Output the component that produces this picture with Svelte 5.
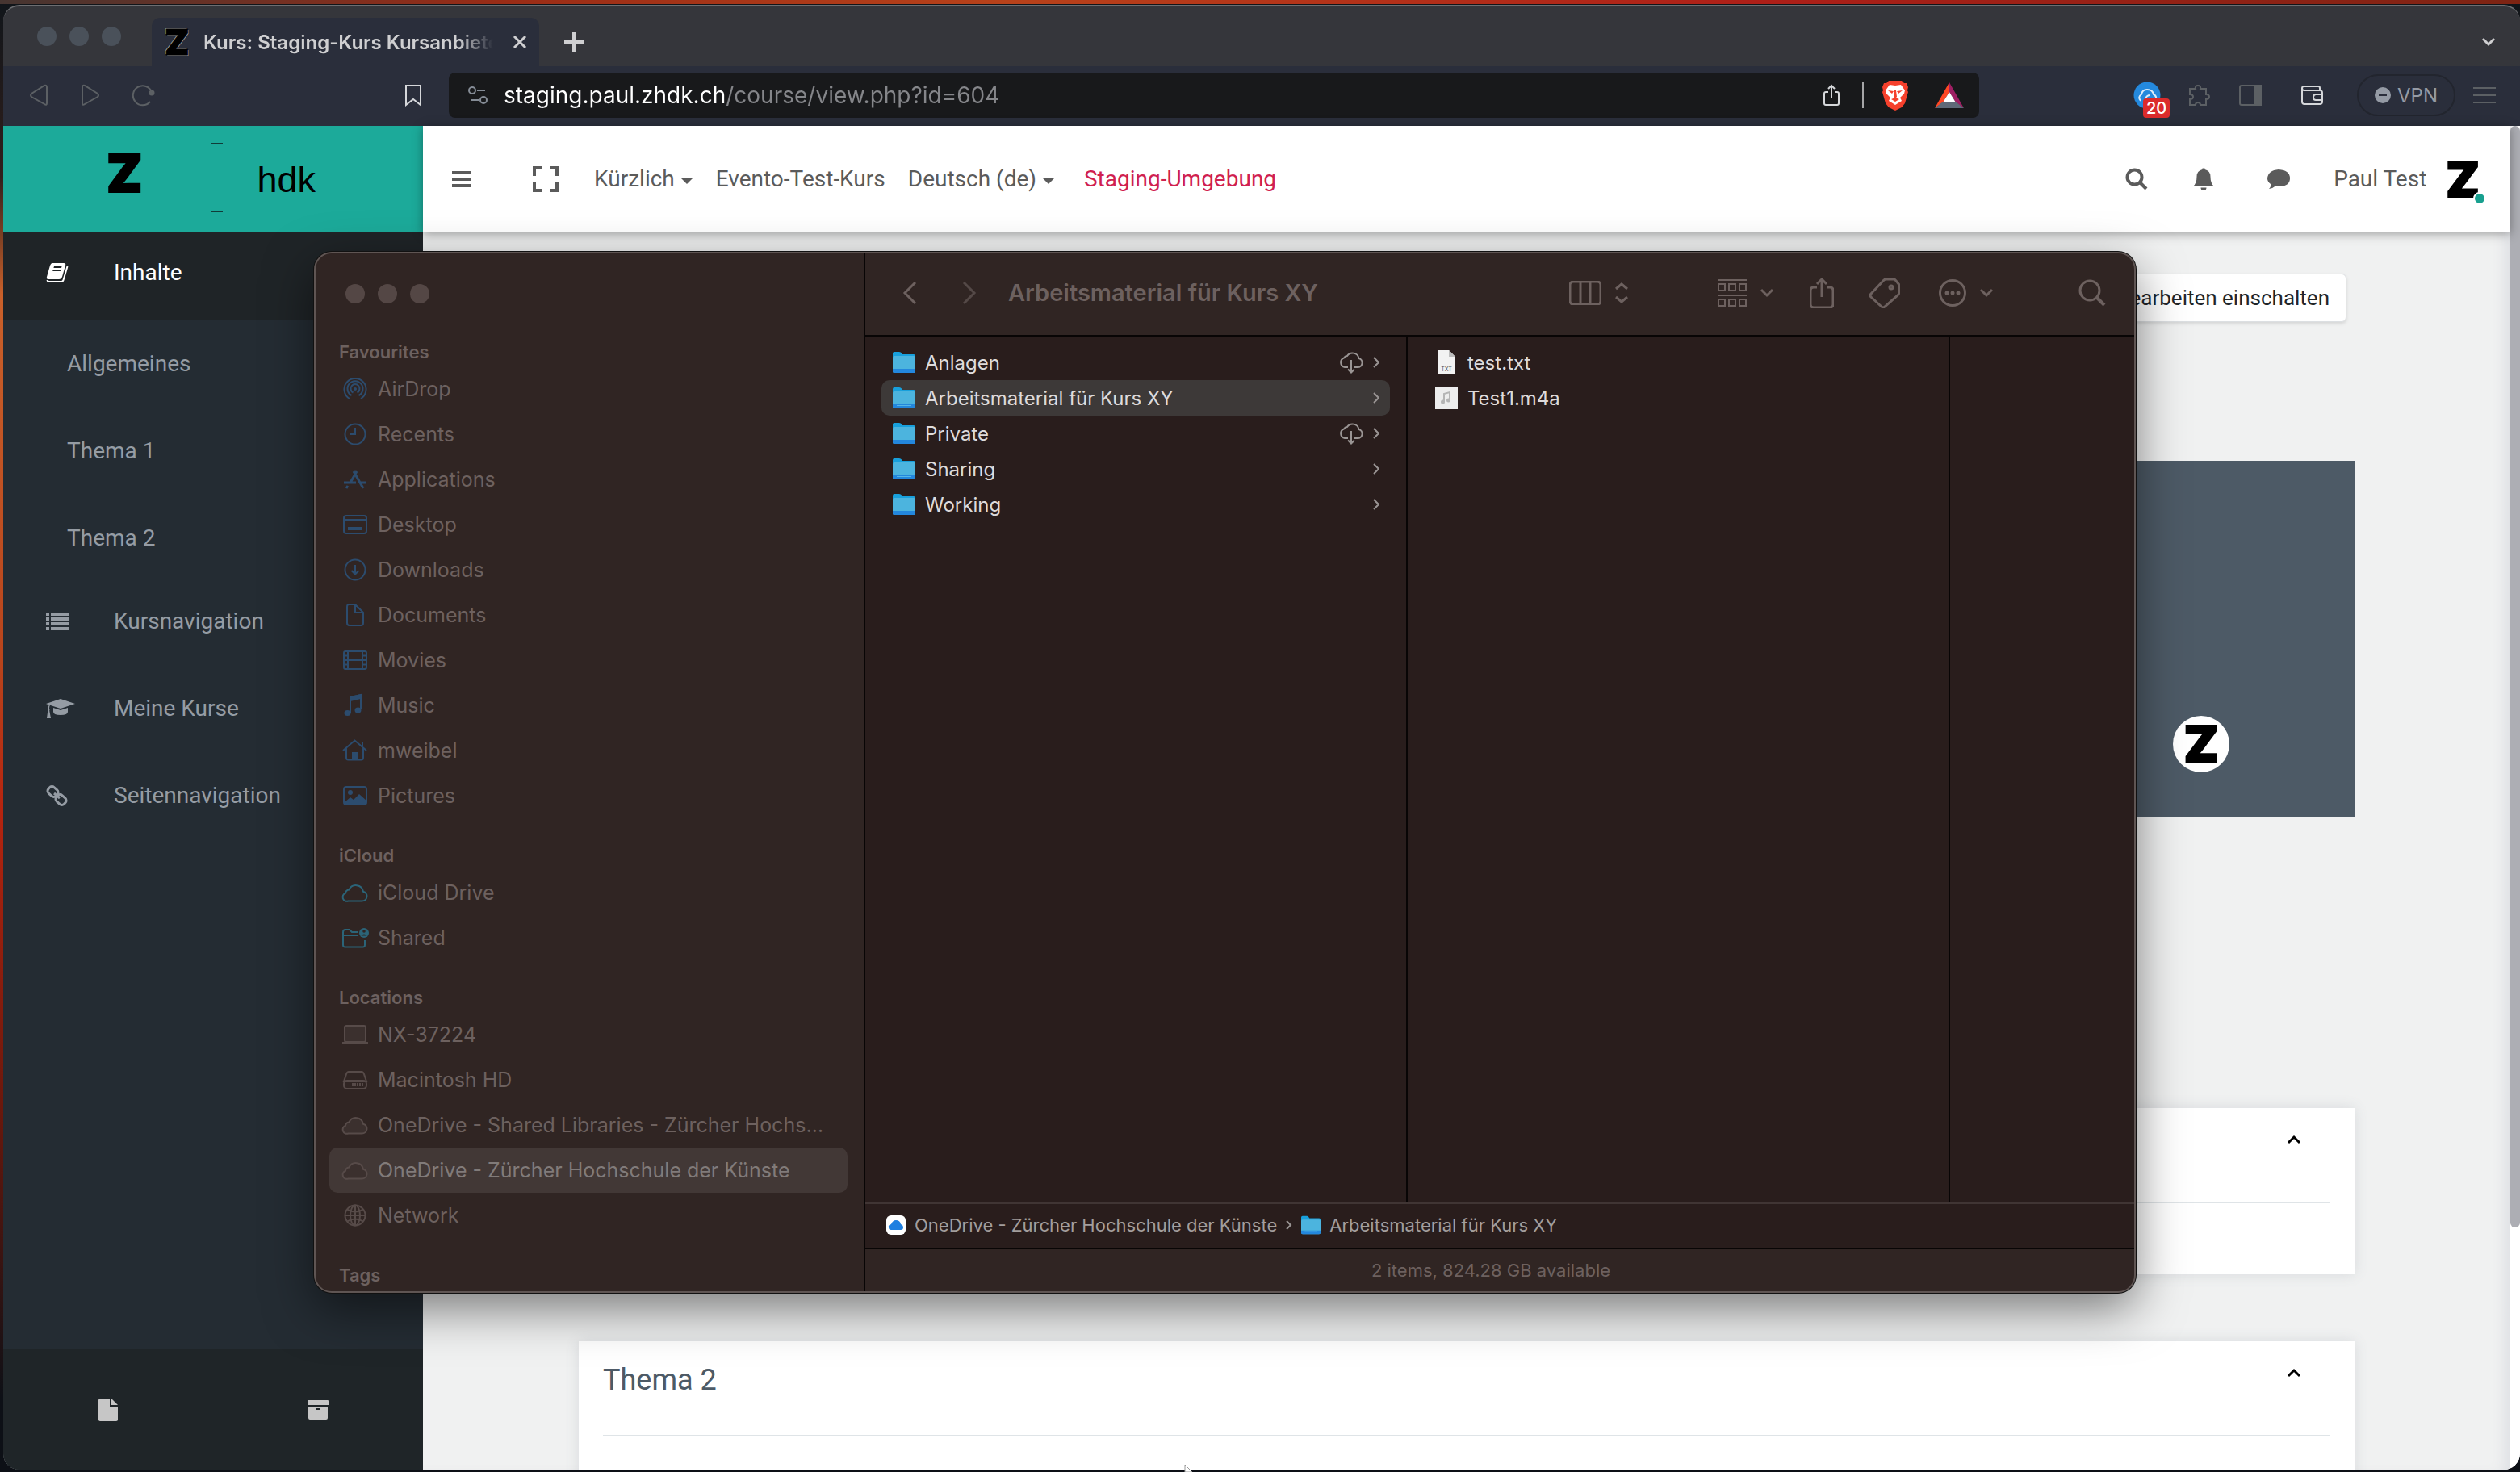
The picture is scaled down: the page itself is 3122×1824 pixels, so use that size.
<script lang="ts">
    interface PlaceGroup {
        title: string
        tone: string
        items: { icon: string; label: string; selected?: boolean }[]
    }

    let url = $state('staging.paul.zhdk.ch/course/view.php?id=604')

    const sections = ['Allgemeines', 'Thema 1', 'Thema 2']

    const navigation = [
        { icon: 'list', label: 'Kursnavigation' },
        { icon: 'graduation', label: 'Meine Kurse' },
        { icon: 'link', label: 'Seitennavigation' },
    ]

    const places: PlaceGroup[] = [
        {
            title: 'Favourites',
            tone: 'blue',
            items: [
                { icon: 'airdrop', label: 'AirDrop' },
                { icon: 'clock', label: 'Recents' },
                { icon: 'apps', label: 'Applications' },
                { icon: 'desktop', label: 'Desktop' },
                { icon: 'download', label: 'Downloads' },
                { icon: 'document', label: 'Documents' },
                { icon: 'film', label: 'Movies' },
                { icon: 'music', label: 'Music' },
                { icon: 'house', label: 'mweibel' },
                { icon: 'picture', label: 'Pictures' },
            ],
        },
        {
            title: 'iCloud',
            tone: 'teal',
            items: [
                { icon: 'cloud', label: 'iCloud Drive' },
                { icon: 'shared', label: 'Shared' },
            ],
        },
        {
            title: 'Locations',
            tone: 'grey',
            items: [
                { icon: 'laptop', label: 'NX-37224' },
                { icon: 'disk', label: 'Macintosh HD' },
                { icon: 'cloud', label: 'OneDrive - Shared Libraries - Zürcher Hochs…' },
                { icon: 'cloud', label: 'OneDrive - Zürcher Hochschule der Künste', selected: true },
                { icon: 'globe', label: 'Network' },
            ],
        },
        { title: 'Tags', tone: 'grey', items: [] },
    ]

    const folders = [
        { name: 'Anlagen', remote: true },
        { name: 'Arbeitsmaterial für Kurs XY', selected: true },
        { name: 'Private', remote: true },
        { name: 'Sharing' },
        { name: 'Working' },
    ]
</script>

{#snippet chevron(dir: string)}
    <svg class="chevron {dir}" viewBox="0 0 18 12" width="18" height="12">
        <path d="M2 2l7 7 7-7" />
    </svg>
{/snippet}

{#snippet folder()}
    <svg class="folder" viewBox="0 0 28 26" width="28" height="26">
        <path d="M0 2q0-2 2-2h6q2 0 3 1.500L12 3h14q2 0 2 2v4H0z" fill="#18a0dc" />
        <rect y="5" width="28" height="21" rx="2" fill="#4cb4de" />
        <path d="M0 21h28v3q0 2-2 2H2q-2 0-2-2z" fill="#2387dd" />
        <path d="M5 22.500h18" stroke="#55b7e8" stroke-width="1" />
    </svg>
{/snippet}

{#snippet placeIcon(name: string)}
    <svg class="place-icon" viewBox="0 0 36 32" width="36" height="32">
        {#if name === 'airdrop'}
            <path d="M11 28a13.500 13.500 0 1 1 14 0M13.500 24a9.500 9.500 0 1 1 9 0M15.500 20.500a5.500 5.500 0 1 1 5 0" />
            <circle cx="18" cy="16" r="2" class="solid" />
        {:else if name === 'clock'}
            <circle cx="18" cy="16" r="12.500" />
            <path d="M18 8v8h-7" />
        {:else if name === 'apps'}
            <path d="M20 6L12 20M16 6l12 21M4 20h15M25 20h7M9 24l-2 3" class="thick" />
        {:else if name === 'desktop'}
            <rect x="4" y="5" width="28" height="22" rx="3" />
            <path d="M4 10h28" />
            <rect x="9" y="19" width="18" height="4" class="solid" />
        {:else if name === 'download'}
            <circle cx="18" cy="16" r="12.500" />
            <path d="M18 10v11M13.500 17l4.500 4.500 4.500-4.500" />
        {:else if name === 'document'}
            <path d="M10 3h8l10 10v13q0 3-3 3H11q-3 0-3-3V6q0-3 2-3zM18 3v10h10" />
        {:else if name === 'film'}
            <rect x="4" y="5" width="28" height="22" rx="2" />
            <path d="M9 5v22M27 5v22M9 16h18M4 10.500h5M4 16h5M4 21.500h5M27 10.500h5M27 16h5M27 21.500h5" />
        {:else if name === 'music'}
            <path d="M12 25V6l13-3v18" />
            <path d="M12 5l13-3v6l-13 3z" class="solid" />
            <ellipse cx="8.500" cy="25.500" rx="4" ry="3.500" class="solid" />
            <ellipse cx="21.500" cy="22" rx="4" ry="3.500" class="solid" />
        {:else if name === 'house'}
            <path d="M3 16L17.500 3.500 32 16M7 13v12q0 2.500 2.500 2.500h16q2.500 0 2.500-2.500V13M27 11V6" />
            <rect x="14" y="18" width="7" height="9" class="solid" />
        {:else if name === 'picture'}
            <rect x="4" y="5" width="28" height="22" rx="3" />
            <circle cx="12" cy="12" r="3" class="solid" />
            <path d="M5 24l7-6 4 3 7-7 9 8v4H5z" class="solid" />
        {:else if name === 'cloud'}
            <path d="M9.500 26.500h17a6 6 0 0 0 1.500-11.800 9.300 9.300 0 0 0-17.600-2.200 5 5 0 0 0-4.400 4.200 5.200 5.200 0 0 0 3.500 9.800z" class="tint" />
        {:else if name === 'shared'}
            <path d="M22 9h-8l-3-3H6q-3 0-3 3v16q0 2.500 2.500 2.500h22q2.500 0 2.500-2.500v-6M3 13h19" />
            <circle cx="29" cy="10" r="6" class="solid" />
            <circle cx="29" cy="8" r="1.800" class="hole" />
            <path d="M25.500 13.500q3.500-4 7 0z" class="hole" />
        {:else if name === 'laptop'}
            <rect x="5" y="5" width="26" height="20" rx="2" class="tint" />
            <path d="M2 26.500h32" class="thick" />
        {:else if name === 'disk'}
            <path d="M10 6h16q2 0 3 3l3 9H4l3-9q1-3 3-3z" />
            <rect x="4" y="17" width="28" height="10" rx="4" />
            <path d="M15 20v4M18 20v4M21 20v4M24 20v4M27 20v4" />
        {:else if name === 'globe'}
            <circle cx="18" cy="16" r="12.500" />
            <ellipse cx="18" cy="16" rx="6" ry="12.500" />
            <path d="M18 3.500v25M5.500 16h25M8 8.500q10 6 20 0M8 23.500q10-6 20 0" />
        {/if}
    </svg>
{/snippet}

{#snippet navIcon(name: string)}
    <svg class="nav-icon" viewBox="0 0 36 28" width="36" height="28">
        {#if name === 'book'}
            <path fill-rule="evenodd" d="M8 2h14q3 0 2 3l-4 14q-1 3-4 3H3q-3 0-2-3L5 5q1-3 3-3zM10 6l-.6 2h9.600l.6-2zM8.800 10l-.6 2h9.600l.6-2z" />
            <path d="M26.500 6l-5 17q-.6 2-3 2H4q-2 0-2.500-2" fill="none" stroke="currentColor" stroke-width="2" />
        {:else if name === 'list'}
            <path d="M0 3h4v4H0zM0 9h4v4H0zM0 15h4v4H0zM0 21h4v4H0zM6 3h22v4H6zM6 9h22v4H6zM6 15h22v4H6zM6 21h22v4H6z" />
        {:else if name === 'graduation'}
            <path d="M18 2l18 6-18 6L5 9.800q-1 1.600-1 4.200 1 1 .2 2.400L6 26H1l1.300-9.600q-1-1.400.4-2.600 0-2.600 1-4.400L0 8z" />
            <path d="M9 13l9 3 9-3v5q0 4-9 4t-9-4z" />
        {:else if name === 'link'}
            <g fill="none" stroke="currentColor" stroke-width="3">
                <rect x="2" y="4" width="13" height="10" rx="4" transform="rotate(42 8.500 9)" />
                <rect x="12" y="14" width="13" height="10" rx="4" transform="rotate(42 18.500 19)" />
                <path d="M10 11l7 6" />
            </g>
        {/if}
    </svg>
{/snippet}

<div class="desktop">
    <div class="browser">
        <header class="tab-strip">
            <div class="lights"><span></span><span></span><span></span></div>
            <div class="tab">
                <span class="favicon">Z</span>
                <span class="tab-title">Kurs: Staging-Kurs Kursanbiete</span>
                <button class="plain" aria-label="Close tab">
                    <svg viewBox="0 0 18 18" width="18" height="18"><path d="M2 2l14 14M16 2L2 16" /></svg>
                </button>
            </div>
            <button class="plain new-tab" aria-label="New tab">
                <svg viewBox="0 0 26 26" width="26" height="26"><path d="M13 1v24M1 13h24" /></svg>
            </button>
            <button class="plain tab-menu" aria-label="Tabs">{@render chevron('down')}</button>
        </header>

        <div class="toolbar">
            <div class="history">
                <button class="plain" aria-label="Back">
                    <svg viewBox="0 0 24 28" width="24" height="28"><path d="M22 4v20q0 3-3 1L3 16q-2-2 0-4L19 2q3-1 3 2z" /></svg>
                </button>
                <button class="plain" aria-label="Forward">
                    <svg viewBox="0 0 24 28" width="24" height="28"><path d="M2 4v20q0 3 3 1l16-9q2-2 0-4L5 2Q2 1 2 4z" /></svg>
                </button>
                <button class="plain" aria-label="Reload">
                    <svg viewBox="0 0 28 28" width="28" height="28">
                        <path d="M22 22a12 12 0 1 1 2-12" />
                        <circle cx="24" cy="11" r="3.500" fill="currentColor" stroke="none" />
                    </svg>
                </button>
            </div>
            <button class="plain bookmark" aria-label="Bookmark">
                <svg viewBox="0 0 20 28" width="20" height="28"><path d="M1 2h18v24l-9-7-9 7z" /></svg>
            </button>
            <div class="address">
                <svg class="tune" viewBox="0 0 24 24" width="24" height="24">
                    <circle cx="5" cy="6" r="4" /><path d="M11 6h10M3 18h10" /><circle cx="19" cy="18" r="4" />
                </svg>
                <input class="url" aria-label="Address" bind:value={url} />
                <button class="plain" aria-label="Share">
                    <svg viewBox="0 0 20 28" width="20" height="28"><path d="M6 10H3q-2 0-2 2v12q0 2 2 2h14q2 0 2-2V12q0-2-2-2h-3M10 18V2M6 6l4-4 4 4" /></svg>
                </button>
                <span class="divider"></span>
                <button class="plain" aria-label="Shields">
                    <svg class="filled" viewBox="0 0 34 38" width="34" height="38">
                        <path d="M9 1h16l3 3 3 0 2 5-1 4 1 2-4 14-4 5-8 4-8-4-4-5L1 15l1-2-1-4 2-5 3 0z" fill="#f5402c" />
                        <path d="M17 7l7-1 5 7-1 4-5 5 2 4-8 5-8-5 2-4-5-5-1-4 5-7z" fill="#fff" />
                        <path d="M8 13l7 1-2 3zM26 13l-7 1 2 3zM16 13h2l1 8-2 2-2-2zM12 24l5-2 5 2-5 3z" fill="#f5402c" />
                    </svg>
                </button>
                <button class="plain" aria-label="Rewards">
                    <svg class="filled" viewBox="0 0 36 32" width="36" height="32">
                        <path d="M18 0v12l-8 13L0 32z" fill="#ff4724" />
                        <path d="M18 0v12l8 13 10 7z" fill="#9e1f63" />
                        <path d="M0 32l9-7h18l9 7z" fill="#5f6a78" />
                        <path d="M18 12l8 13H10z" fill="#fff" />
                    </svg>
                </button>
            </div>
            <div class="extensions">
                <button class="plain cloud-ext" aria-label="Cloud extension">
                    <svg class="filled" viewBox="0 0 34 34" width="34" height="34">
                        <circle cx="17" cy="17" r="16.500" fill="#2489dd" />
                        <path d="M9 24q-4-5 1-8 1-6 7-6 7 0 8 6 4 2 3 6M15 22q1-5 6-5" fill="none" stroke="#dcecfa" stroke-width="2" />
                    </svg>
                    <span class="badge">20</span>
                </button>
                <button class="plain dim" aria-label="Extensions">
                    <svg viewBox="0 0 28 28" width="28" height="28"><path d="M3 6h7q-1-4 3-4t3 4h7v7q4 0 4 3t-4 3v7h-7q0-3-3-3t-3 3H3v-7q4 0 4-3t-4-3z" /></svg>
                </button>
                <button class="plain dim" aria-label="Sidebar">
                    <svg viewBox="0 0 28 26" width="28" height="26"><rect x="1" y="1" width="26" height="24" rx="2" /><path d="M19 1h8v24h-8z" fill="currentColor" /></svg>
                </button>
                <button class="plain wallet" aria-label="Wallet">
                    <svg viewBox="0 0 28 26" width="28" height="26"><path d="M24 7V4q0-2-2-2H4Q2 2 2 4.500V21q0 3 3 3h19q3 0 3-3V10q0-3-3-3H5Q2 7 2 4.500M27 12h-8q-3 0-3 3.500t3 3.500h8M20 15.500h1" /></svg>
                </button>
                <button class="vpn">
                    <svg viewBox="0 0 20 20" width="20" height="20"><circle cx="10" cy="10" r="10" /><path d="M5 10h10" /></svg>
                    VPN
                </button>
                <button class="plain dim" aria-label="Menu">
                    <svg viewBox="0 0 28 22" width="28" height="22"><path d="M0 2h28M0 11h28M0 20h28" /></svg>
                </button>
            </div>
        </div>

        <div class="page">
            <aside class="drawer">
                <a class="brand" href="#home">
                    <span class="brand-z">Z</span>
                    <span class="brand-marks"><i></i><i></i></span>
                    <span class="brand-name">hdk</span>
                </a>
                <nav>
                    <a class="nav-row current" href="#inhalte">{@render navIcon('book')}Inhalte</a>
                    {#each sections as section}
                        <a class="nav-sub" href="#section">{section}</a>
                    {/each}
                    {#each navigation as item}
                        <a class="nav-row" href="#nav">{@render navIcon(item.icon)}{item.label}</a>
                    {/each}
                </nav>
                <footer class="drawer-footer">
                    <button class="plain" aria-label="Dokument">
                        <svg class="filled" viewBox="0 0 24 28" width="24" height="28"><path d="M2 0h12v10h10v16q0 2-2 2H2q-2 0-2-2V2q0-2 2-2zM16 0l8 8h-8z" /></svg>
                    </button>
                    <button class="plain" aria-label="Archiv">
                        <svg class="filled" viewBox="0 0 26 24" width="26" height="24"><path fill-rule="evenodd" d="M1 0h24q1 0 1 1v5H0V1q0-1 1-1zM1 8h24v14q0 2-2 2H3q-2 0-2-2zM10 10v2h6v-2z" /></svg>
                    </button>
                </footer>
            </aside>

            <div class="content">
                <header class="topbar">
                    <button class="plain menu-button" aria-label="Menü">
                        <svg viewBox="0 0 24 22" width="24" height="22"><path d="M0 3h24M0 11h24M0 19h24" /></svg>
                    </button>
                    <button class="plain expand-button" aria-label="Vollbild">
                        <svg viewBox="0 0 32 32" width="32" height="32"><path d="M2 12V2h9M21 2h9v10M30 20v10h-9M11 30H2V20" /></svg>
                    </button>
                    <nav class="top-links">
                        <a href="#recent">Kürzlich <i class="caret"></i></a>
                        <a href="#evento">Evento-Test-Kurs</a>
                        <a href="#lang">Deutsch (de) <i class="caret"></i></a>
                        <a class="staging" href="#staging">Staging-Umgebung</a>
                    </nav>
                    <div class="user-tools">
                        <button class="plain" aria-label="Suche">
                            <svg viewBox="0 0 28 28" width="28" height="28"><circle cx="11.500" cy="11.500" r="9" /><path d="M18 18l8 8" /></svg>
                        </button>
                        <button class="plain bell" aria-label="Mitteilungen">
                            <svg class="filled" viewBox="0 0 26 30" width="26" height="30"><path d="M11.500 3V1.500h3V3q7 1.500 7 9 0 8 4.500 12H0q4.500-4 4.500-12 0-7.500 7-9zM9.500 25.500h7a3.500 3.500 0 0 1-7 0z" /></svg>
                        </button>
                        <button class="plain comment" aria-label="Nachrichten">
                            <svg class="filled" viewBox="0 0 28 26" width="28" height="26"><path d="M14 1q14 1 14 11T14 22q-2 0-4-.5Q6 25 2 25q3-3 2-6-4-3-4-7Q1 2 14 1z" /></svg>
                        </button>
                        <a class="user" href="#profile">Paul Test <span class="avatar">Z<i></i></span></a>
                    </div>
                </header>

                <main>
                    <div class="page-actions"><button class="edit">Bearbeiten einschalten</button></div>
                    <section class="banner"><span>Z</span></section>
                    <section class="card">
                        <div class="card-head"><button class="plain" aria-label="Einklappen">{@render chevron('up')}</button></div>
                    </section>
                    <section class="card">
                        <div class="card-head"><h3>Thema 2</h3><button class="plain" aria-label="Einklappen">{@render chevron('up')}</button></div>
                    </section>
                </main>
            </div>
            <div class="scrollbar"><span></span></div>
        </div>
    </div>

    <div class="finder">
        <aside class="places">
            <div class="lights"><span></span><span></span><span></span></div>
            {#each places as group}
                <section class="place-group {group.tone}">
                    <h4>{group.title}</h4>
                    {#each group.items as item}
                        <button class="place" class:selected={item.selected}>
                            {@render placeIcon(item.icon)}
                            <span>{item.label}</span>
                        </button>
                    {/each}
                </section>
            {/each}
        </aside>

        <div class="files">
            <header class="finder-bar">
                <button class="plain" aria-label="Back">
                    <svg viewBox="0 0 18 30" width="18" height="30"><path d="M16 2L3 15l13 13" /></svg>
                </button>
                <button class="plain forward" aria-label="Forward">
                    <svg viewBox="0 0 18 30" width="18" height="30"><path d="M2 2l13 13L2 28" /></svg>
                </button>
                <h2>Arbeitsmaterial für Kurs XY</h2>
                <button class="plain group view" aria-label="Column view">
                    <svg viewBox="0 0 40 30" width="40" height="30"><rect x="1" y="1" width="38" height="28" rx="4" /><path d="M14 1v28M26 1v28" /></svg>
                    <svg viewBox="0 0 18 26" width="18" height="26"><path d="M2 8l7-6 7 6M2 18l7 6 7-6" /></svg>
                </button>
                <button class="plain group grid" aria-label="Group items">
                    <svg viewBox="0 0 36 36" width="36" height="36">
                        <path d="M0 2h36M0 21h36" />
                        <path d="M1 7h8v8H1zM14 7h8v8h-8zM27 7h8v8h-8zM1 26h8v8H1zM14 26h8v8h-8zM27 26h8v8h-8z" />
                    </svg>
                    {@render chevron('down')}
                </button>
                <button class="plain share" aria-label="Share">
                    <svg viewBox="0 0 30 38" width="30" height="38"><path d="M9 12H5q-4 0-4 4v17q0 4 4 4h20q4 0 4-4V16q0-4-4-4h-4M15 24V2M9 8l6-6 6 6" /></svg>
                </button>
                <button class="plain tag" aria-label="Tags">
                    <svg viewBox="0 0 38 38" width="38" height="38"><path d="M21 2h9q2 0 3 2l4 5v9q0 2-2 4L19 36q-2 2-4 0L2 24q-2-2 0-4L18 3q1-1 3-1z" /><circle cx="27" cy="12" r="2" /></svg>
                </button>
                <button class="plain group more" aria-label="Actions">
                    <svg viewBox="0 0 34 34" width="34" height="34">
                        <circle cx="17" cy="17" r="15.500" />
                        <g fill="currentColor" stroke="none"><circle cx="10" cy="17" r="2.500" /><circle cx="17" cy="17" r="2.500" /><circle cx="24" cy="17" r="2.500" /></g>
                    </svg>
                    {@render chevron('down')}
                </button>
                <button class="plain search" aria-label="Search">
                    <svg viewBox="0 0 34 34" width="34" height="34"><circle cx="14" cy="14" r="12" /><path d="M23 23l9 9" stroke-width="4" /></svg>
                </button>
            </header>

            <div class="columns">
                <div class="column">
                    {#each folders as entry}
                        <button class="entry" class:selected={entry.selected}>
                            {@render folder()}
                            <span>{entry.name}</span>
                            {#if entry.remote}
                                <svg class="remote" viewBox="0 0 30 28" width="30" height="28">
                                    <path d="M11 20H7a6 6 0 0 1-1-11.500 5 5 0 0 1 4-2.500 8 8 0 0 1 14.500 3A5.600 5.600 0 0 1 23 20h-4M15 11v15M11 22.500l4 4 4-4" />
                                </svg>
                            {/if}
                            <svg class="arrow" viewBox="0 0 8 14" width="8" height="14"><path d="M1 1l6 6-6 6" /></svg>
                        </button>
                    {/each}
                </div>
                <div class="column">
                    <button class="entry">
                        <svg viewBox="0 0 28 32" width="28" height="32">
                            <path d="M3 1h14l8 8v22H3z" fill="#f2f2f2" /><path d="M17 1v8h8z" fill="#bdbdbd" />
                            <text x="14" y="27" text-anchor="middle">TXT</text>
                        </svg>
                        <span>test.txt</span>
                    </button>
                    <button class="entry">
                        <svg viewBox="0 0 28 32" width="28" height="32">
                            <path d="M0 2h28v28H0z" fill="#ededed" />
                            <path d="M11 21V11l7-2v10" fill="none" stroke="#b5b5b5" stroke-width="2" />
                            <circle cx="9.500" cy="21" r="2.500" fill="#b5b5b5" /><circle cx="16.500" cy="19" r="2.500" fill="#b5b5b5" />
                        </svg>
                        <span>Test1.m4a</span>
                    </button>
                </div>
                <div class="column preview"></div>
            </div>

            <div class="path-bar">
                <svg viewBox="0 0 24 24" width="24" height="24">
                    <rect width="24" height="24" rx="6" fill="#fff" />
                    <path d="M6 18h12q3 0 3-3t-3-4q-1-5-6-5-4 0-6 5-4 1-3 4 0 3 3 3z" fill="#1e7fe0" />
                </svg>
                <span>OneDrive - Zürcher Hochschule der Künste</span>
                <svg class="arrow" viewBox="0 0 8 14" width="8" height="14"><path d="M1 2l5 5-5 5" /></svg>
                {@render folder()}
                <span>Arbeitsmaterial für Kurs XY</span>
            </div>
            <div class="status-bar">2 items, 824.28 GB available</div>
        </div>
    </div>

    <svg class="pointer" viewBox="0 0 12 10" width="12" height="10"><path d="M1 10V1l9 9z" /></svg>
</div>

<style>
    :global(body) {
        margin: 0;
    }

    .desktop {
        position: relative;
        box-sizing: border-box;
        height: 100vh;
        padding: 6px 0 3px 4px;
        overflow: hidden;
        background:
            linear-gradient(90deg, #453531, #9a2c16 20%, #b8421a 40%, #ae1f18 70%, #7d2413) top / 100% 5px no-repeat,
            linear-gradient(180deg, #10151a, #301f1c 12%, #c9602a 20%, #b8441c 45%, #b5240f 55%, #6b180c 75%, #0d1016 95%);
        font-family: Inter, 'Liberation Sans', sans-serif;
    }

    .plain {
        display: flex;
        align-items: center;
        padding: 0;
        border: 0;
        background: none;
        color: inherit;
        font: inherit;
    }

    svg {
        flex: none;
        fill: none;
        stroke: currentColor;
        stroke-width: 2;
    }

    svg.filled {
        fill: currentColor;
        stroke: none;
    }

    a {
        color: inherit;
        text-decoration: none;
    }

    .chevron {
        stroke-width: 3;
    }

    .chevron.up {
        transform: rotate(180deg);
    }

    .browser {
        display: flex;
        flex-direction: column;
        box-sizing: border-box;
        height: 100%;
        overflow: hidden;
        border-top: 2px solid #6d6e71;
        border-radius: 20px;
        background: #35363b;
    }

    .lights {
        display: flex;
        gap: 16px;
    }

    .lights span {
        width: 24px;
        height: 24px;
        border-radius: 50%;
        background: #4a515a;
    }

    .tab-strip {
        display: flex;
        flex: none;
        align-items: center;
        height: 74px;
        padding: 0 30px 0 42px;
        box-sizing: border-box;
        color: #cfcfd1;
    }

    .tab {
        display: flex;
        align-items: center;
        align-self: flex-end;
        box-sizing: border-box;
        width: 480px;
        height: 60px;
        margin: 0 30px 0 38px;
        padding: 0 15px 0 16px;
        border-radius: 10px 10px 0 0;
        background: #2a2e3b;
        font-size: 24px;
        font-weight: 600;
    }

    .favicon {
        width: 48px;
        color: #000;
        font-size: 44px;
        font-weight: 900;
        line-height: 44px;
        text-shadow: 1px 1px #aaa, -1px -1px #aaa;
        -webkit-text-stroke: 1px #000;
    }

    .tab-title {
        flex: 1;
        overflow: hidden;
        margin-right: 24px;
        white-space: nowrap;
        mask-image: linear-gradient(90deg, #000 88%, transparent);
    }

    .tab svg {
        stroke-width: 3;
    }

    .new-tab svg {
        stroke-width: 4;
    }

    .new-tab,
    .tab-menu {
        padding-top: 14px;
    }

    .tab-menu {
        margin-left: auto;
    }

    .toolbar {
        display: flex;
        flex: none;
        align-items: center;
        height: 74px;
        box-sizing: border-box;
        padding: 0 30px 2px 32px;
        background: #2a2e3b;
        color: #d5d7da;
    }

    .history {
        display: flex;
        gap: 40px;
        margin-right: 310px;
        color: #5c6064;
    }

    .bookmark {
        margin-right: 34px;
    }

    .address {
        display: flex;
        flex: 1;
        align-items: center;
        box-sizing: border-box;
        height: 56px;
        margin-right: 191px;
        padding: 0 19px 0 24px;
        border-radius: 8px;
        background: #18191b;
    }

    .address .divider {
        width: 2px;
        height: 32px;
        margin: 0 22px 0 28px;
        background: #a5a5a7;
    }

    .address .plain:last-child {
        margin-left: 32px;
    }

    .tune {
        color: #858c96;
    }

    .url {
        flex: 1;
        min-width: 0;
        margin-left: 20px;
        padding: 0;
        border: 0;
        background: linear-gradient(90deg, #fff 276px, #85868a 276px);
        background-clip: text;
        color: transparent;
        font: 28px Inter, 'Liberation Sans', sans-serif;
    }

    .extensions {
        display: flex;
        align-items: center;
    }

    .dim {
        color: #5c6064;
    }

    .cloud-ext {
        position: relative;
        margin-right: 33px;
    }

    .badge {
        position: absolute;
        top: 21px;
        left: 12px;
        padding: 0 4px;
        border-radius: 4px;
        background: #db2b2b;
        color: #fff;
        font-size: 20px;
        font-weight: 500;
        line-height: 24px;
    }

    .wallet {
        margin: 0 42px 0 48px;
    }

    .dim + .dim {
        margin-left: 36px;
    }

    .vpn {
        display: flex;
        align-items: center;
        gap: 8px;
        height: 52px;
        margin-right: 22px;
        padding: 0 20px;
        border: 2px solid #22252e;
        border-radius: 26px;
        background: none;
        color: #959ba5;
        font: 24px Inter, sans-serif;
    }

    .vpn circle {
        fill: #959ba5;
        stroke: none;
    }

    .vpn path {
        stroke: #2a2e3b;
    }

    .page {
        display: flex;
        flex: 1;
        min-height: 0;
        background: #fff;
        font-family: Roboto, sans-serif;
    }

    .drawer {
        display: flex;
        flex: none;
        flex-direction: column;
        width: 520px;
        background: #242c33;
        color: #959ca4;
        font-size: 28px;
    }

    .brand {
        display: flex;
        align-items: baseline;
        box-sizing: border-box;
        height: 132px;
        padding: 21px 0 25px 128px;
        background: #1caa9a;
        color: #000;
    }

    .brand-z {
        padding-top: 6px;
        font: 900 64px/64px Inter, sans-serif;
        -webkit-text-stroke: 2px #000;
    }

    .brand-marks {
        display: flex;
        flex-direction: column;
        align-self: stretch;
        justify-content: space-between;
        margin: 0 42px 0 86px;
    }

    .brand-marks i {
        width: 14px;
        height: 2px;
        background: #103c38;
    }

    .brand-name {
        font: 45px 'Liberation Sans', sans-serif;
    }

    .nav-row,
    .nav-sub {
        display: flex;
        align-items: center;
        box-sizing: border-box;
        height: 108px;
    }

    .nav-row {
        gap: 48px;
        padding: 0 0 9px 53px;
    }

    .nav-sub {
        padding-left: 79px;
    }

    .nav-row.current {
        background: #1f2427;
        color: #fff;
    }

    .nav-icon {
        fill: currentColor;
        stroke: none;
    }

    .drawer-footer {
        display: flex;
        justify-content: space-around;
        align-items: center;
        height: 149px;
        margin-top: auto;
        background: #1f2528;
        color: #c6c6c6;
    }

    .content {
        display: flex;
        flex: 1;
        flex-direction: column;
        min-width: 0;
        background: #f0f1f1;
        box-shadow: inset -16px 0 16px -8px #dfe1e5;
    }

    .topbar {
        z-index: 1;
        display: flex;
        flex: none;
        align-items: center;
        height: 132px;
        box-sizing: border-box;
        padding: 0 30px 1px 36px;
        background: #fff;
        box-shadow: 0 2px 12px rgba(0, 0, 0, 0.35);
        color: #5b5b5b;
        font-size: 28px;
    }

    .menu-button {
        margin-right: 76px;
    }

    .menu-button svg,
    .expand-button svg,
    .user-tools svg {
        stroke-width: 4;
    }

    .expand-button {
        margin-right: 44px;
    }

    .top-links {
        display: flex;
        gap: 28px;
    }

    .top-links a:last-child {
        margin-left: 8px;
    }

    .caret {
        display: inline-block;
        border: 8px solid transparent;
        border-top-color: currentColor;
        border-bottom: 0;
        vertical-align: middle;
    }

    .staging {
        color: #d0204f;
    }

    .user-tools {
        display: flex;
        align-items: center;
        margin-left: auto;
    }

    .bell {
        margin: 0 66px 0 56px;
    }

    .comment {
        margin-right: 54px;
    }

    .user {
        display: flex;
        align-items: center;
        gap: 24px;
    }

    .avatar {
        position: relative;
        padding: 0 8px 0 0;
        color: #000;
        font: 900 60px/64px Inter, sans-serif;
        -webkit-text-stroke: 2px #000;
    }

    .avatar i {
        position: absolute;
        right: 0;
        bottom: 0;
        width: 12px;
        height: 12px;
        border: 2px solid #fff;
        border-radius: 50%;
        background: #18a08f;
    }

    main {
        display: flex;
        flex: 1;
        flex-direction: column;
        min-height: 0;
        padding: 51px 193px 0;
    }

    .page-actions {
        display: flex;
        justify-content: flex-end;
        margin-right: 10px;
    }

    .edit {
        height: 60px;
        padding: 0 20px;
        border: 1px solid #dcdfe2;
        border-radius: 6px;
        background: #fff;
        box-shadow: 0 2px 4px rgba(0, 0, 0, 0.12);
        color: #212529;
        font: 26px Roboto, sans-serif;
    }

    .banner {
        display: flex;
        flex: none;
        justify-content: flex-end;
        align-items: flex-end;
        box-sizing: border-box;
        height: 441px;
        margin: 172px 0 361px;
        padding: 0 155px 55px 0;
        background: #4d5a66;
    }

    .banner span {
        width: 70px;
        border-radius: 50%;
        background: #fff;
        color: #000;
        font: 900 62px/70px Inter, sans-serif;
        text-align: center;
        -webkit-text-stroke: 2px #000;
    }

    .card {
        flex: none;
        box-sizing: border-box;
        height: 206px;
        margin-bottom: 83px;
        padding: 0 30px;
        background: #fff;
        box-shadow: 0 0 16px rgba(90, 100, 120, 0.16);
    }

    .card-head {
        display: flex;
        box-sizing: border-box;
        height: 118px;
        padding: 26px 36px 0 0;
        border-bottom: 2px solid #dfe4e7;
    }

    .card-head h3 {
        margin: 0;
        color: #4d5a66;
        font-size: 36px;
        font-weight: 400;
        line-height: 44px;
    }

    .card-head .plain {
        height: 26px;
        margin-left: auto;
        color: #000;
    }

    .scrollbar {
        flex: none;
        width: 12px;
        background: #fff;
    }

    .scrollbar span {
        display: block;
        height: 82%;
        border-radius: 6px;
        background: #adaeb4;
    }

    .finder {
        position: absolute;
        top: 312px;
        right: 476px;
        bottom: 222px;
        left: 389px;
        z-index: 2;
        display: flex;
        overflow: hidden;
        border: 2px solid #5f5553;
        border-radius: 22px;
        background: #302523;
        box-shadow: 0 0 0 1px #111, 0 20px 60px rgba(0, 0, 0, 0.5);
        color: #6d615f;
    }

    .places {
        flex: none;
        width: 679px;
        overflow: hidden;
        border-right: 2px solid #080505;
    }

    .places .lights {
        align-items: center;
        height: 100px;
        padding-left: 37px;
    }

    .places .lights span {
        background: #544745;
    }

    .place-group + .place-group {
        margin-top: 24px;
    }

    .place-group h4 {
        box-sizing: border-box;
        height: 40px;
        margin: 0;
        padding: 3px 0 0 29px;
        font-size: 22px;
        font-weight: 600;
        line-height: 38px;
    }

    .place {
        display: flex;
        align-items: center;
        gap: 10px;
        box-sizing: border-box;
        width: 642px;
        height: 56px;
        margin-left: 17px;
        padding: 0 12px 0 14px;
        border: 0;
        border-radius: 10px;
        background: none;
        color: inherit;
        font: 25px Inter, sans-serif;
        white-space: nowrap;
    }

    .place.selected {
        background: #423836;
        color: #817b7a;
    }

    .place-icon .solid {
        fill: currentColor;
        stroke: none;
    }

    .place-icon .thick {
        stroke-width: 3;
    }

    .place-icon .hole {
        fill: #302523;
        stroke: none;
    }

    .blue .place-icon {
        color: #2c4c6e;
    }

    .teal .place-icon {
        color: #2b6478;
    }

    .grey .place-icon {
        color: #574b49;
    }

    .grey .place-icon .tint {
        fill: #3b302e;
    }

    .files {
        display: flex;
        flex: 1;
        flex-direction: column;
        min-width: 0;
    }

    .finder-bar {
        display: flex;
        flex: none;
        align-items: center;
        box-sizing: border-box;
        height: 103px;
        padding: 0 35px 4px 46px;
        border-bottom: 2px solid #080505;
    }

    .finder-bar svg {
        stroke-width: 3;
    }

    .finder-bar h2 {
        flex: 1;
        margin: 0;
        font-size: 29px;
        font-weight: 600;
    }

    .forward {
        margin: 0 39px 0 56px;
        opacity: 0.6;
    }

    .group {
        gap: 16px;
    }

    .grid {
        margin: 0 44px 0 110px;
    }

    .grid svg:first-child {
        stroke-width: 2;
    }

    .tag {
        margin: 0 48px 0 44px;
    }

    .search {
        margin-left: 105px;
    }

    .columns {
        display: flex;
        flex: 1;
        min-height: 0;
        background: #291d1c;
    }

    .column {
        flex: none;
        box-sizing: border-box;
        width: 672px;
        padding: 10px 20px;
        border-right: 2px solid #080505;
    }

    .column.preview {
        flex: 1;
        border: 0;
    }

    .entry {
        display: flex;
        align-items: center;
        gap: 12px;
        box-sizing: border-box;
        width: 100%;
        height: 44px;
        padding: 0 13px 0 14px;
        border: 0;
        border-radius: 10px;
        background: none;
        color: #dedbdb;
        font: 24px Inter, sans-serif;
        text-align: left;
    }

    .entry.selected {
        background: #3d3938;
    }

    .entry span {
        flex: 1;
    }

    .entry text {
        fill: #555;
        stroke: none;
        font-size: 7px;
    }

    .folder,
    .entry svg:first-child,
    .path-bar svg:first-child {
        stroke: none;
    }

    .path-bar .folder {
        width: 24px;
    }

    .remote,
    .arrow {
        color: #9a9594;
    }

    .path-bar {
        display: flex;
        flex: none;
        align-items: center;
        gap: 11px;
        box-sizing: border-box;
        height: 58px;
        padding: 0 26px 2px;
        border-top: 2px solid #403534;
        border-bottom: 2px solid #080505;
        background: #291d1c;
        color: #a39e9d;
        font-size: 22px;
    }

    .status-bar {
        flex: none;
        height: 52px;
        padding-right: 22px;
        font-size: 22px;
        line-height: 52px;
        text-align: center;
    }

    .pointer {
        position: absolute;
        bottom: 0;
        left: 47%;
        z-index: 3;
        fill: #fff;
        stroke: #999;
        stroke-width: 1;
    }
</style>
